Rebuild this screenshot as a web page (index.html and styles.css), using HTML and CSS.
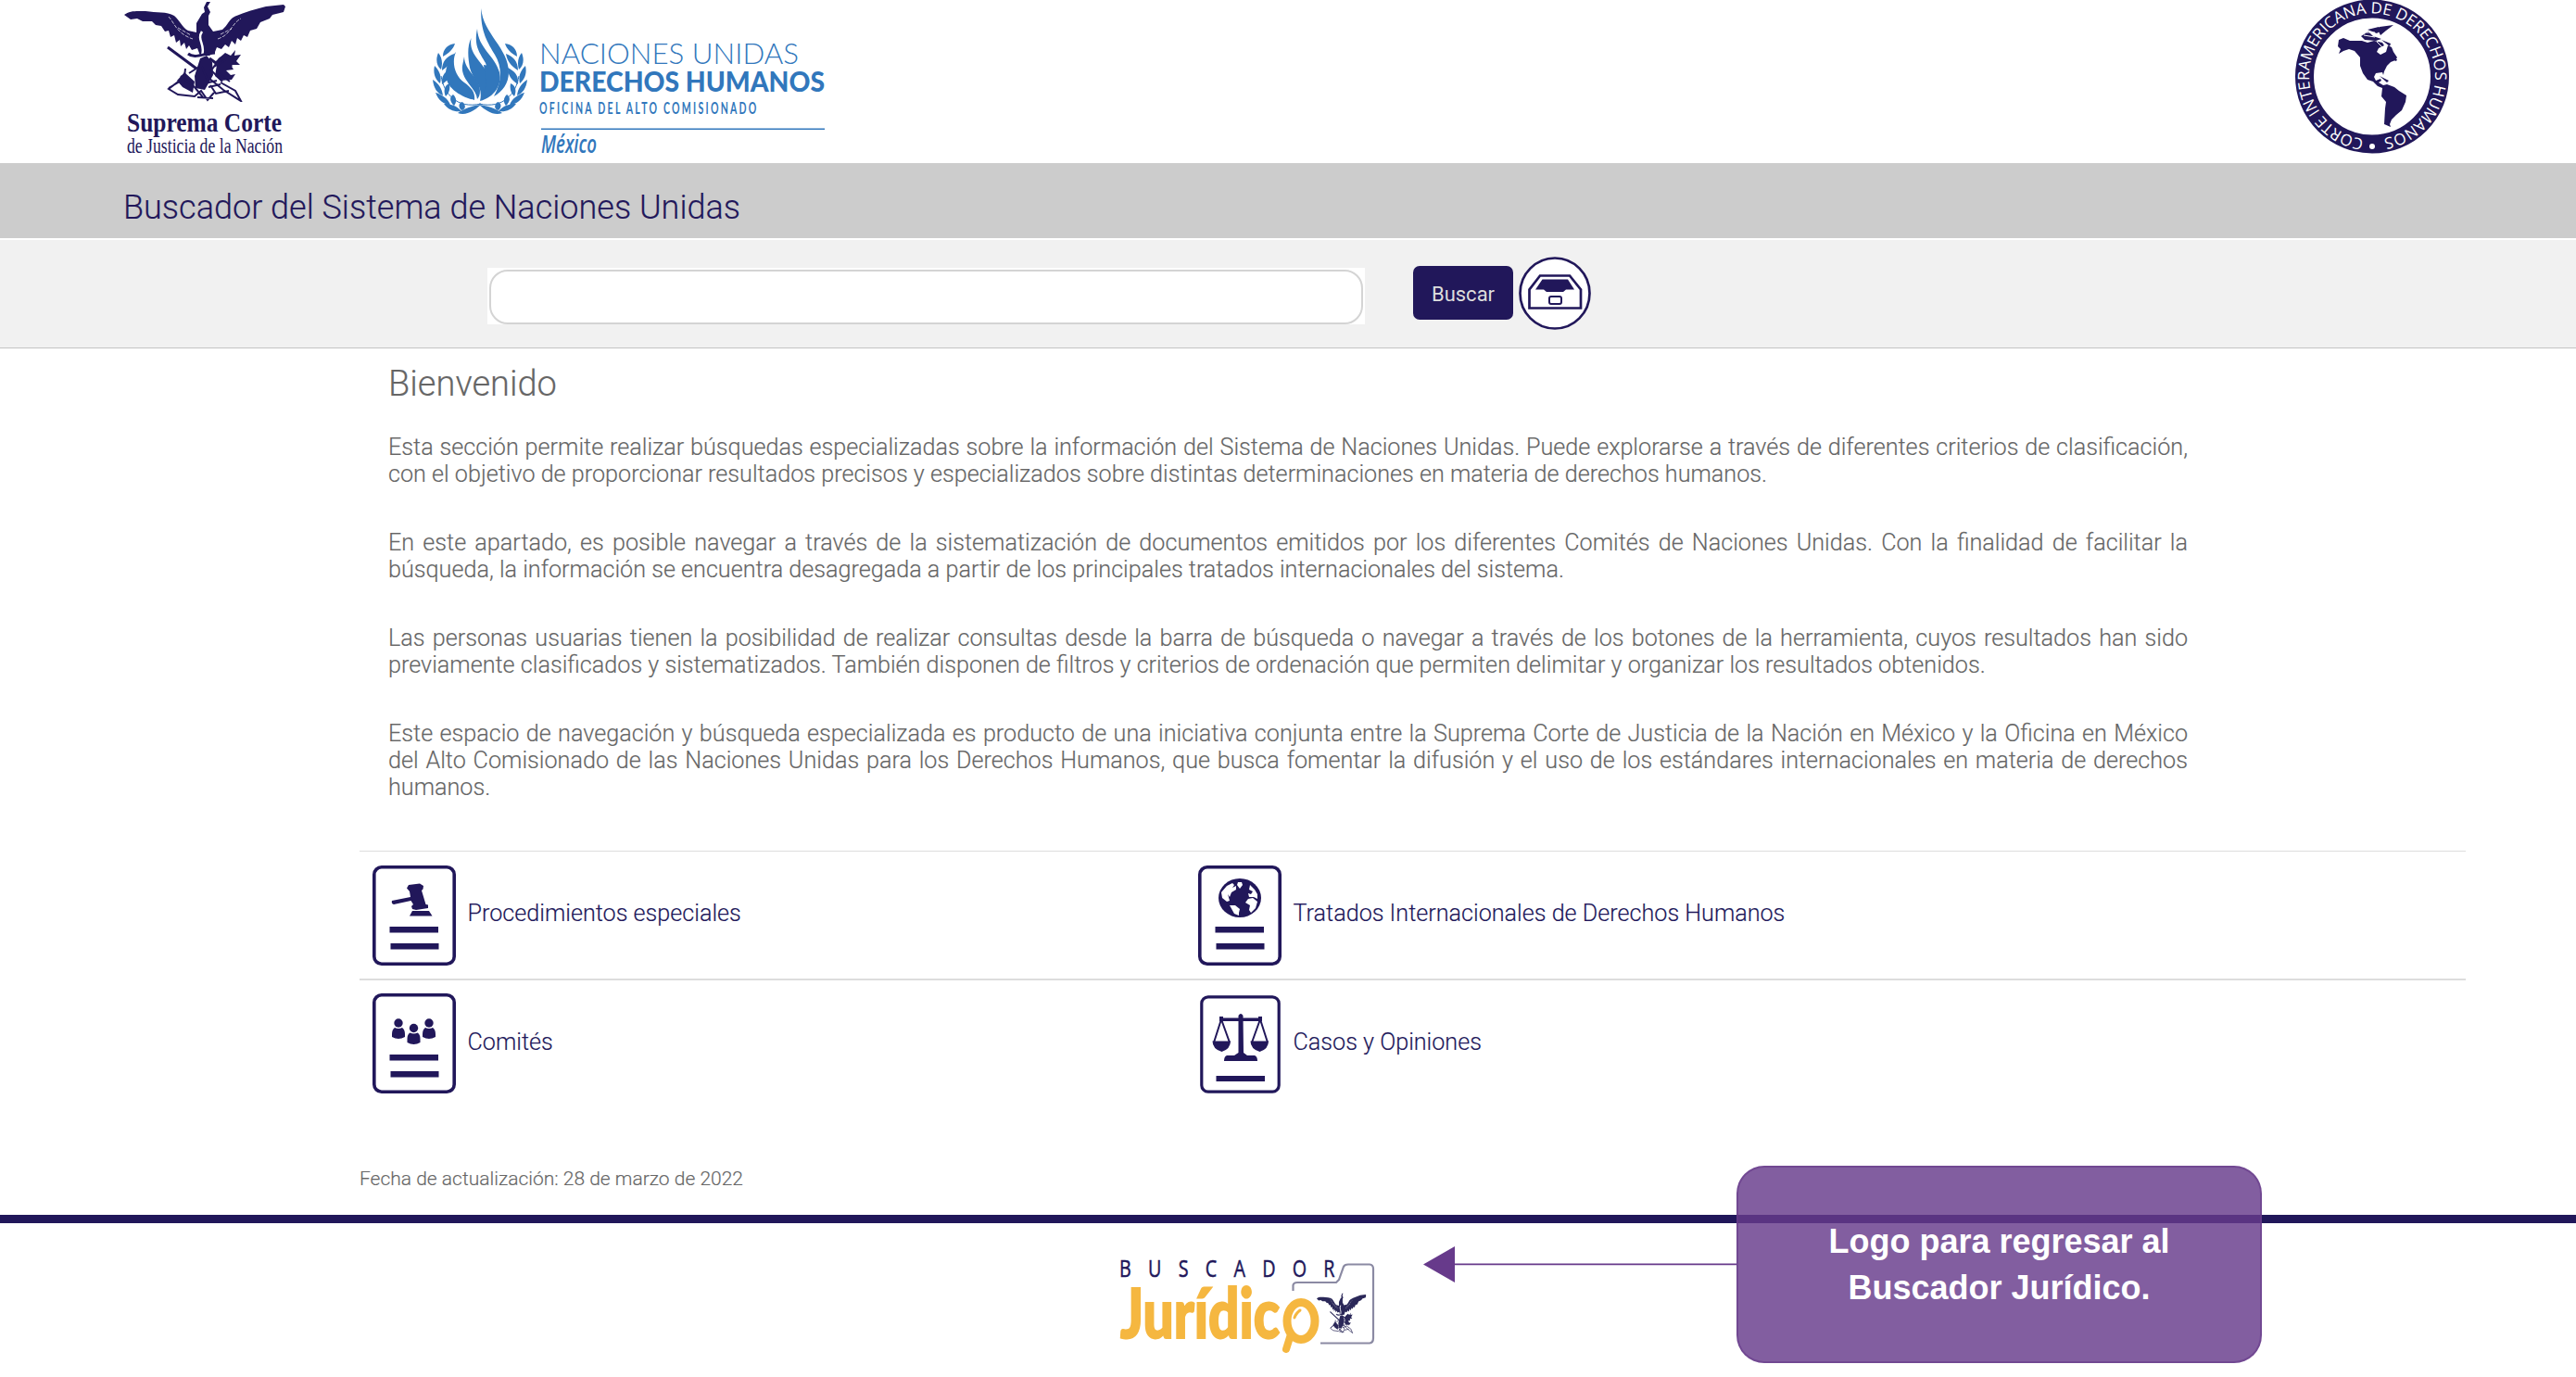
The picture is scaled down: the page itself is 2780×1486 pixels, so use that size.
FILE: index.html
```html
<!DOCTYPE html>
<html lang="es">
<head>
<meta charset="utf-8">
<title>Buscador del Sistema de Naciones Unidas</title>
<link rel="stylesheet" href="styles.css">
</head>
<body>
<svg class="defs" width="0" height="0" aria-hidden="true">
  <defs>
    <symbol id="eagle" viewBox="0 0 174 110">
      <path d="M0 16C6 11 14 12 23 12C35 14 46 12 54 17C60 22 63 30 69 33L78 35L78 25L84 15L87 13L86 8L89 2L93 2L90 7L93 13L91 17L91 27L96 34L106 32C112 27 113 21 119 18C131 13 141 10 153 7L172 5L174 7L172 13L160 16L157 20L147 24L143 31L136 33L133 40L129 38L126 44L122 41L120 48L116 44L113 51L109 48L105 53L100 51L98 56L92 60L82 60L79 52L73 54L70 49L67 53L65 46L61 50L60 43L56 46L54 38L50 40L48 33L44 34L40 28L34 27L30 23L20 23L14 20L7 21Z" fill="currentColor"/>
      <path d="M84 34C78 43 88 48 84 60" fill="none" stroke="#fff" stroke-width="2.500"/>
      <path d="M48 18C54 24 56 36 74 42M101 42C116 37 115 26 126 20M58 30L72 38M104 37L116 31" fill="none" stroke="#fff" stroke-width="1" stroke-dasharray="4 1.500" opacity=".7"/>
      <path d="M47 51L78 74M69 58C76 64 87 57 98 57M92 63L99 68L106 62L116 72" fill="none" stroke="currentColor" stroke-width="3"/>
      <path d="M82 63L76 82L77 95L87 97L96 81L95 67L89 60ZM101 64L109 57L115 60L120 54L119 60L126 59L121 66L125 70L115 70L118 75L110 76L115 81L120 80L116 86L104 87L98 82ZM65 78L57 87L63 94L74 100L76 88Z" fill="currentColor"/>
      <path d="M66 74L65 83L48 96L58 102L76 104L83 98L90 108L97 100M61 82L76 94L85 105M91 84L107 97L126 109L120 98L104 89M93 92L99 101L113 98M97 72L109 65M102 79L114 88M48 95L60 88M79 105L96 106M70 79L81 72M84 72L91 89L100 87M104 62L94 76L106 88M91 94L104 91" fill="none" stroke="currentColor" stroke-width="2"/>
    </symbol>
    <symbol id="sheet" viewBox="0 0 90 108">
      <rect x="1.800" y="1.800" width="86.400" height="104.400" rx="8" fill="#fff" stroke="currentColor" stroke-width="3.600"/>
    </symbol>
    <symbol id="branch" viewBox="0 0 52 80">
      <path d="M52 68C26 74 12 57 9 38" fill="none" stroke="currentColor" stroke-width="1"/>
      <path d="M24 3C17 4 11 8 11 17C18 13 22 9 24 3ZM6 13C3 20 4 27 9 31C11 24 10 18 6 13ZM23 14C15 17 10 22 10 32C18 27 22 21 23 14ZM2 27C0 35 3 42 8 46C10 38 7 32 2 27ZM21 29C13 33 9 38 10 47C18 42 21 36 21 29ZM0 42C1 51 5 57 11 59C10 51 6 46 0 42ZM18 46C13 48 11 53 14 60C18 56 19 52 18 46ZM3 56C6 64 12 69 19 69C16 62 10 58 3 56ZM22 58C18 61 18 65 23 70C26 66 26 62 22 58ZM12 68C17 75 24 77 31 76C26 70 19 68 12 68ZM32 66C28 67 27 71 31 75C36 74 36 69 32 66ZM27 78C36 81 44 76 52 69C43 70 34 73 27 78Z" fill="currentColor"/>
    </symbol>
  </defs>
</svg>

<header class="logos">
  <svg class="logo-court" width="180" height="176" viewBox="0 0 180 176">
    <use href="#eagle" x="2" y="0" width="174" height="110"/>
    <text class="court-name" x="5" y="142" textLength="167" lengthAdjust="spacingAndGlyphs">Suprema Corte</text>
    <text class="court-sub" x="5" y="165" textLength="168" lengthAdjust="spacingAndGlyphs">de Justicia de la Nación</text>
  </svg>
  <svg class="logo-un" width="440" height="176" viewBox="0 0 440 176">
    <use href="#branch" x="7" y="44" width="52" height="80"/>
    <use href="#branch" width="52" height="80" transform="translate(109 44) scale(-1 1)"/>
    <g fill="currentColor">
      <path d="M59.300 9C61 36 89 52 89 78C89 90 82 99 73 104C82 88 82 72 74 59C67 47 58 34 59.300 9Z"/>
      <path d="M55 31C56 52 74 60 79 78C82 91 74 105 58 109C66 97 70 82 64 68C58 57 51 50 55 31Z"/>
      <path d="M48.500 41C46 57 56 63 63 74C70 88 66 101 58 109C62 92 50 86 47 73C45 62 44 50 48.500 41Z"/>
      <path d="M41 61C41 77 58 83 58 98C58 102 57 105 55 107C54 95 37 86 39 71Z"/>
      <path d="M32 56C27 68 31 82 41 89C48 94 53 99 52 108C36 104 20 94 21 78C22 69 27 62 32 56Z"/>
      <path d="M62 70L76 72L79 88L68 103L59 107L65 92Z"/>
    </g>
    <text class="un-light" x="122" y="69" textLength="280" lengthAdjust="spacingAndGlyphs">NACIONES UNIDAS</text>
    <text class="un-bold" x="122" y="99" textLength="308" lengthAdjust="spacingAndGlyphs">DERECHOS HUMANOS</text>
    <g transform="translate(122 123) scale(.62 1)"><text class="un-office" textLength="378">OFICINA DEL ALTO COMISIONADO</text></g>
    <path d="M124 139.300H430" stroke="currentColor" stroke-width="1.500"/>
    <text class="un-country" x="124" y="165" textLength="60" lengthAdjust="spacingAndGlyphs">México</text>
  </svg>
  <svg class="logo-cidh" width="170" height="170" viewBox="0 0 170 170">
    <circle cx="85" cy="82.500" r="73" fill="none" stroke="currentColor" stroke-width="20"/>
    <path id="ring" d="M75.900 149.900A68 68 0 1 1 94.100 149.900" fill="none"/>
    <text class="ring-text"><textPath href="#ring" textLength="405" lengthAdjust="spacing">CORTE INTERAMERICANA DE DERECHOS HUMANOS</textPath></text>
    <circle cx="85" cy="158" r="3" fill="#fff"/>
    <path d="M49 43L54 41L61 44L74 44L80 46L87 44L96 46L98 49L92 52L90 56L94 59L100 56L102 49L106 51L108 56L112 62L110 65L105 67L101 71L98 77L97 81L96 78L89 79L87 83L89 87L94 85L95 87L92 89L97 92L101 91L109 94L114 98L122 103L121 110L117 119L111 124L106 129L104 134L105 137L98 134L99 117L100 110L95 104L96 95L91 93L86 88L80 86L75 79L72 71L72 62L66 55L60 53L54 55L49 58L51 53L48 50Z" fill="currentColor"/>
    <path d="M73 39L81 34L86 39L95 42L89 44L77 43ZM80 32L92 29L96 32L90 36ZM93 29L108 27L100 33L94 38L92 34ZM95 43L105 47L104 50ZM93 82L103 87L101 89ZM104 63L112 64L111 66Z" fill="currentColor"/>
    <path d="M76 38L88 40M79 35L88 35M90 45L98 53" stroke="#fff" stroke-width="1"/>
  </svg>
</header>

<div class="title-bar"><h1>Buscador del Sistema de Naciones Unidas</h1></div>

<form class="search-bar">
  <div class="field"><input type="text" aria-label="Buscar"></div>
  <button class="search-button" type="button">Buscar</button>
  <svg class="drawer" width="78" height="80" viewBox="0 0 78 80">
    <ellipse cx="39" cy="39.500" rx="37.500" ry="38" fill="#fff" stroke="currentColor" stroke-width="2.700"/>
    <path d="M23 20.500H55L67 35.500V55.500H11.500V35.500Z" fill="none" stroke="currentColor" stroke-width="2.700"/>
    <path d="M25.500 24.500H53L60 35.500H51L48 38H30L27 35.500H18Z" fill="currentColor"/>
    <rect x="33" y="43" width="13" height="8" rx="2" fill="none" stroke="currentColor" stroke-width="2"/>
  </svg>
</form>

<main class="content">
  <section class="intro">
    <h2>Bienvenido</h2>
    <p>Esta sección permite realizar búsquedas especializadas sobre la información del Sistema de Naciones Unidas. Puede explorarse a través de diferentes criterios de clasificación, con el objetivo de proporcionar resultados precisos y especializados sobre distintas determinaciones en materia de derechos humanos.</p>
    <p>En este apartado, es posible navegar a través de la sistematización de documentos emitidos por los diferentes Comités de Naciones Unidas. Con la finalidad de facilitar la búsqueda, la información se encuentra desagregada a partir de los principales tratados internacionales del sistema.</p>
    <p>Las personas usuarias tienen la posibilidad de realizar consultas desde la barra de búsqueda o navegar a través de los botones de la herramienta, cuyos resultados han sido previamente clasificados y sistematizados. También disponen de filtros y criterios de ordenación que permiten delimitar y organizar los resultados obtenidos.</p>
    <p>Este espacio de navegación y búsqueda especializada es producto de una iniciativa conjunta entre la Suprema Corte de Justicia de la Nación en México y la Oficina en México del Alto Comisionado de las Naciones Unidas para los Derechos Humanos, que busca fomentar la difusión y el uso de los estándares internacionales en materia de derechos humanos.</p>
  </section>
  <nav class="sections">
    <div class="row">
      <a class="entry">
        <svg width="90" height="108" viewBox="0 0 90 108"><use href="#sheet" width="90" height="108"/>
          <g fill="currentColor"><path d="M37 24.500L39 21L51 19.500L55 22L54.500 25.500L53 27L57.500 42L60 42.500L60 46L47 48L43 47L42 44L44 42L41.500 38L23 42Q20 41 21 38L41 34L40 28Z"/><path d="M43 49H61L64.500 54.500H40Z"/><path d="M18.500 66H71V72.500H18.500ZM19.500 84H71.500V90.500H19.500Z"/></g></svg>
        <span>Procedimientos especiales</span>
      </a>
      <a class="entry">
        <svg width="90" height="108" viewBox="0 0 90 108"><use href="#sheet" width="90" height="108"/>
          <ellipse cx="45" cy="35" rx="23" ry="21" fill="currentColor"/>
          <path d="M31 22L37 19L39 21L37 24L41 22L41 26L36 29L34 34L32 31L34 38L31 39L26 35L25 29ZM34 43L40 43L45 47L44 51L44 54L39 52ZM43 18L47 18L48 21L45 25L42 21ZM56 21L61 26L64 31L64 36L60 34L55 34L54 30L57 31L59 28L55 26ZM54 36L59 35L64 39L62 46L57 51L55 48L56 43L51 40Z" fill="#fff"/>
          <path d="M18.500 66H71V72.500H18.500ZM19.500 84H71.500V90.500H19.500Z" fill="currentColor"/></svg>
        <span>Tratados Internacionales de Derechos Humanos</span>
      </a>
    </div>
    <div class="row">
      <a class="entry">
        <svg width="90" height="108" viewBox="0 0 90 108"><use href="#sheet" width="90" height="108"/>
          <g fill="currentColor"><circle cx="28" cy="32" r="4.700"/><circle cx="61" cy="32" r="4.700"/><circle cx="44.500" cy="37.500" r="4.700"/>
          <path d="M24 37Q28 39 32 37Q35 39 35 44V47Q28 51 21 47V44Q21 39 24 37ZM57 37Q61 39 65 37Q68 39 68 44V47Q61 51 54 47V44Q54 39 57 37ZM40.500 42.500Q44.500 44.500 48.500 42.500Q51.500 44 51.500 49V53Q44.500 57 37.500 53V49Q37.500 44 40.500 42.500Z"/>
          <path d="M18.500 66H71V72.500H18.500ZM19.500 84H71.500V90.500H19.500Z"/></g></svg>
        <span>Comités</span>
      </a>
      <a class="entry">
        <svg width="90" height="108" viewBox="0 0 90 108"><rect x="3.800" y="3.800" width="83.400" height="102.400" rx="7" fill="#fff" stroke="currentColor" stroke-width="3.200"/>
          <path d="M25 28L17 53M25 28L34 53M67 28L58 53M67 28L75 53" fill="none" stroke="currentColor" stroke-width="2"/>
          <path d="M23 25H27V30H23ZM65 25H69V30H65ZM24 26.500H68V30H24ZM15.500 51.500H35Q35 60 25.500 63Q15.500 60 15.500 51.500ZM56.500 51.500H76Q76 60 66.500 63Q56.500 60 56.500 51.500ZM43.500 24Q46 20 48.500 24L49 64L53 67H61Q64 68 64 73H28Q28 68 31 67H39L43.500 64ZM19.500 89H72V95H19.500Z" fill="currentColor"/></svg>
        <span>Casos y Opiniones</span>
      </a>
    </div>
  </nav>
  <p class="updated">Fecha de actualización: 28 de marzo de 2022</p>
</main>

<footer class="footer">
  <svg class="logo-finder" width="290" height="120" viewBox="0 0 290 120">
    <g transform="translate(7 36) scale(.76 1)"><text class="finder-top" textLength="306">BUSCADOR</text></g>
    <text class="finder-main" x="8" y="102" textLength="172" lengthAdjust="spacingAndGlyphs">Jurídic</text>
    <path d="M194.500 51V45Q195 42 199 42H241L244 39L249 25Q250 22.500 254 22.500H277Q281 23 281 27V102Q281 107 277 107.500H224" fill="none" stroke="#8b8aa3" stroke-width="2.200"/>
    <path d="M192 98L187 114" stroke="currentColor" stroke-width="8" stroke-linecap="round"/>
    <ellipse cx="203" cy="83.500" rx="15" ry="20" fill="#fff" stroke="currentColor" stroke-width="9"/>
    <path d="M196 80Q197 76 202 72" fill="none" stroke="currentColor" stroke-width="3" stroke-linecap="round"/>
    <use class="finder-eagle" href="#eagle" width="174" height="110" transform="translate(220 53) scale(.307 .4)"/>
  </svg>
</footer>

<svg class="pointer" width="338" height="39" viewBox="0 0 338 39"><path d="M0 19.500L34 0V39ZM34 18.500H338V20.300H34Z" fill="currentColor"/></svg>
<aside class="callout">Logo para regresar al<br>Buscador Jurídico.</aside>
</body>
</html>
```
FILE: styles.css
```css
* { box-sizing: border-box; }
body {
  margin: 0;
  position: relative;
  height: 1486px;
  overflow: hidden;
  background: #fff;
  color: #666;
  font-family: Roboto, "Liberation Sans", sans-serif;
  font-weight: 300;
  -webkit-text-stroke: .15px;
}
svg text, .callout, .search-button { -webkit-text-stroke: 0; }
.defs { display: block; }
.logos {
  height: 176px;
  padding: 0 135px 0 132px;
  display: flex;
  color: #21175a;
}
.logo-un { margin-left: 148px; color: #3177bc; }
.logo-cidh { margin-left: auto; }
.logos text { fill: currentColor; }
.court-name { font: bold 29px "Liberation Serif", serif; }
.logos .court-sub { font: 24px "Liberation Serif", serif; }
.un-light { font: 300 31px Lato, sans-serif; }
.un-bold { font: 900 30px Lato, sans-serif; }
.un-office { font: 700 17px Lato, sans-serif; }
.un-country { font: italic 600 27px "Open Sans", sans-serif; }
.logos .ring-text { font: 17px "Open Sans", sans-serif; fill: #fff; }

.title-bar {
  height: 81px;
  padding: 27px 133px 0;
  background: #ccc;
  color: #21175a;
}
h1 { margin: 0; font-size: 36px; line-height: 42px; font-weight: 300; }

.search-bar {
  height: 117px;
  margin-top: 2px;
  padding-left: 526px;
  display: flex;
  align-items: flex-start;
  background: #f1f1f1;
  border-bottom: 1px solid #c4c4c4;
}
.field {
  width: 947px;
  height: 61px;
  margin-top: 30px;
  padding: 2px 2px 0 2px;
  background: #fff;
}
.field input {
  display: block;
  width: 100%;
  height: 59px;
  padding: 0 24px;
  border: 2px solid #d4d4d4;
  border-radius: 20px;
  background: #fff;
  outline: 0;
}
.search-button {
  width: 108px;
  height: 58px;
  margin: 28px 6px 0 52px;
  padding: 2px 0 0;
  border: 0;
  border-radius: 7px;
  background: #21175a;
  color: #ddd;
  font: 400 22px Roboto, sans-serif;
}
.drawer { margin-top: 18px; color: #21175a; }

.content { padding-left: 388px; }
.intro { width: 1973px; padding: 16px 0 0 31px; }
h2 { margin: 0 0 32px; font-size: 38px; line-height: 44px; font-weight: 300; }
.intro p {
  margin: 0 0 45px;
  font-size: 25.180px;
  line-height: 29px;
  text-align: justify;
}
.sections { width: 2273px; margin-top: 54px; color: #21175a; }
.row {
  height: 138px;
  display: grid;
  grid-template-columns: 891px 1fr;
  border-top: 1px solid #ddd;
}
.row + .row { border-top-width: 2px; height: 140px; }
.entry {
  padding: 15px 0 0 14px;
  display: flex;
  gap: 12.500px;
}
.row + .row .entry { padding-top: 14px; }
.entry span { margin-top: 37px; font-size: 25.160px; line-height: 29px; }
.row + .row span { margin-top: 38px; }
.updated { margin: 64px 0 0; font-size: 21px; line-height: 25px; }

.footer {
  position: absolute;
  top: 1311px;
  left: 0;
  right: 0;
  padding: 22px 0 0 1201px;
  border-top: 9px solid #21175a;
  color: #f5b740;
}
.finder-top { font: 400 26px "Open Sans", sans-serif; fill: #21175a; stroke: #21175a; stroke-width: .5; }
.finder-main { font: 900 74px Lato, sans-serif; fill: currentColor; stroke: currentColor; stroke-width: 2; }
.finder-eagle { color: #2b2859; }
.pointer { position: absolute; left: 1535.500px; top: 1345px; color: #673a8b; }
.callout {
  position: absolute;
  left: 1873.500px;
  top: 1258px;
  width: 567px;
  height: 213px;
  padding: 55px 0 0 1px;
  border: 2px solid rgba(103, 58, 139, .6);
  border-radius: 30px;
  background: rgba(103, 58, 139, .82);
  color: #fff;
  font: bold 36px/50px "Liberation Sans", Arial, sans-serif;
  text-align: center;
}
```
